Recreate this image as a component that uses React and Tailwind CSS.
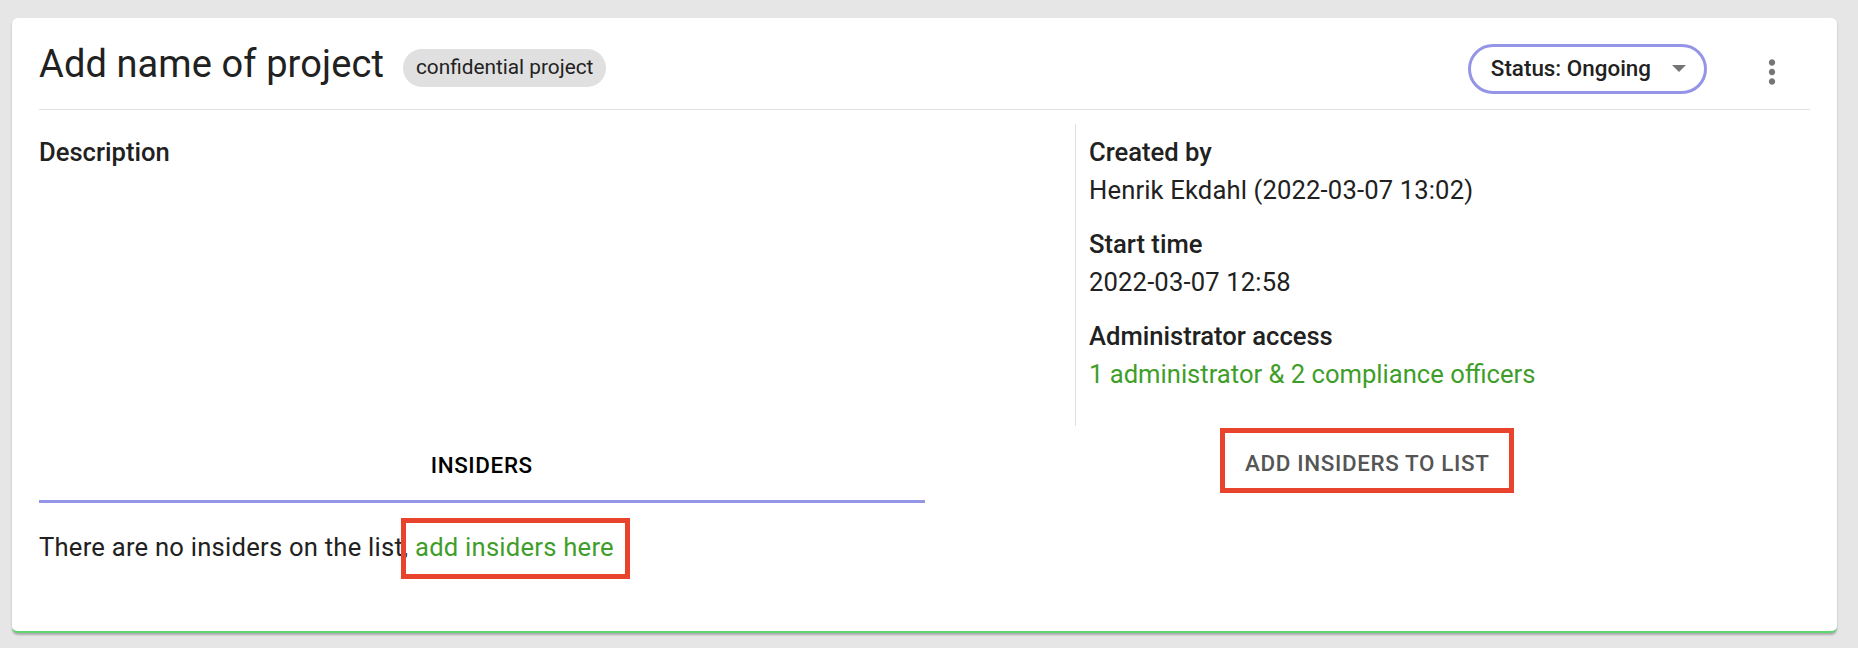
import React from 'react'

const font = { fontFamily: 'Roboto, "Noto Sans", sans-serif' }

function MoreVert() {
  return (
    <svg width="38" height="38" viewBox="0 0 24 24" fill="#757575">
      <path d="M12 8c1.1 0 2-.9 2-2s-.9-2-2-2-2 .9-2 2 .9 2 2 2zm0 2c-1.1 0-2 .9-2 2s.9 2 2 2 2-.9 2-2-.9-2-2-2zm0 6c-1.1 0-2 .9-2 2s.9 2 2 2 2-.9 2-2-.9-2-2-2z" />
    </svg>
  )
}

function InfoItem({ label, children, green }) {
  return (
    <div>
      <div className="font-medium leading-[38.4px] text-[#212121]">{label}</div>
      <div className={`leading-[38.4px] ${green ? 'text-[#3f9e2a]' : 'text-[#212121] tracking-[0.15px]'}`}>{children}</div>
    </div>
  )
}

export default function App() {
  return (
    <div style={font} className="min-h-screen bg-[#e6e6e6] pt-[18px] pl-[12px] pr-[21px]">
      <div className="bg-white rounded-[6px] border-b-2 border-[#5fd46f] shadow-[0_2px_2px_rgba(0,0,0,0.25)] px-[27px] pb-[64px] text-[25.6px]">
        {/* header */}
        <div className="h-[92px] flex items-center border-b border-[#e2e2e2] pt-[2px]">
          <h1 className="text-[38px] leading-[1.2] text-[#212121] tracking-[0.1px]">Add name of project</h1>
          <span className="ml-[19px] mt-[6px] h-[38px] px-[13px] rounded-full bg-[#e0e0e0] text-[20.8px] text-[#222] flex items-center">
            confidential project
          </span>
          <div className="flex-1" />
          <button className="mt-[8px] h-[50px] rounded-full border-[3px] border-[#9595e8] pl-[20px] pr-[18px] flex items-center gap-[21px] text-[22.4px] font-medium text-[#212121]">
            Status: Ongoing
            <svg width="14" height="7" viewBox="0 0 14 7">
              <polygon points="0,0 14,0 7,7" fill="#757575" />
            </svg>
          </button>
          <div className="ml-[41px] mr-[14px] mt-[14px] w-[48px] flex justify-center">
            <MoreVert />
          </div>
        </div>

        {/* details */}
        <div className="mt-[14px] flex">
          <div className="w-[1036px] pt-[9px]">
            <div className="font-medium leading-[38.4px] text-[#212121]">Description</div>
          </div>
          <div className="flex-1 border-l border-[#e0e0e0] pl-[13px] pt-[9px] pb-[33px] flex flex-col gap-[15px]">
            <InfoItem label="Created by">Henrik Ekdahl (2022-03-07 13:02)</InfoItem>
            <InfoItem label="Start time">2022-03-07 12:58</InfoItem>
            <InfoItem label="Administrator access" green>1 administrator &amp; 2 compliance officers</InfoItem>
          </div>
        </div>

        {/* tabs */}
        <div className="flex h-[77px]">
          <div className="flex-1 flex items-center justify-center border-b-[3px] border-[#9595e8] pt-[3px]">
            <span className="text-[22.4px] font-medium uppercase tracking-[0.64px] text-black leading-[26px]">Insiders</span>
          </div>
          <div className="flex-1 flex items-center justify-center">
            <span className="relative text-[22.4px] font-medium uppercase tracking-[0.64px] text-[#555] leading-[26px] mb-[3px]">
              Add insiders to list
              <span className="absolute -top-[22px] -bottom-[17px] -left-[25px] -right-[24px] border-[5px] border-[#e8432c]" />
            </span>
          </div>
        </div>

        <p className="mt-[25px] leading-[38.4px] text-[#212121] tracking-[0.24px]">
          There are no insiders on the list,{' '}
          <span className="relative inline-block text-[#3f9e2a]">
            add insiders here
            <span className="absolute -top-[10px] -bottom-[12px] -left-[14px] -right-[16px] border-[5px] border-[#e8432c]" />
          </span>
        </p>
      </div>
    </div>
  )
}
